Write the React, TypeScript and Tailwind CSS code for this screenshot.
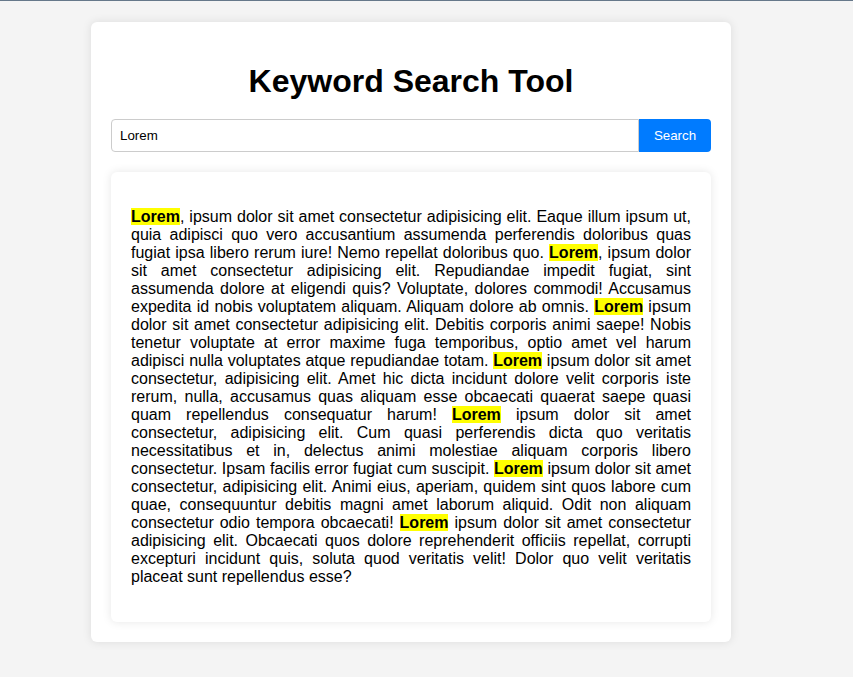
import { Fragment } from 'react'

const text =
  'Lorem, ipsum dolor sit amet consectetur adipisicing elit. Eaque illum ipsum ut, quia adipisci quo vero accusantium assumenda perferendis doloribus quas fugiat ipsa libero rerum iure! Nemo repellat doloribus quo. Lorem, ipsum dolor sit amet consectetur adipisicing elit. Repudiandae impedit fugiat, sint assumenda dolore at eligendi quis? Voluptate, dolores commodi! Accusamus expedita id nobis voluptatem aliquam. Aliquam dolore ab omnis. Lorem ipsum dolor sit amet consectetur adipisicing elit. Debitis corporis animi saepe! Nobis tenetur voluptate at error maxime fuga temporibus, optio amet vel harum adipisci nulla voluptates atque repudiandae totam. Lorem ipsum dolor sit amet consectetur, adipisicing elit. Amet hic dicta incidunt dolore velit corporis iste rerum, nulla, accusamus quas aliquam esse obcaecati quaerat saepe quasi quam repellendus consequatur harum! Lorem ipsum dolor sit amet consectetur, adipisicing elit. Cum quasi perferendis dicta quo veritatis necessitatibus et in, delectus animi molestiae aliquam corporis libero consectetur. Ipsam facilis error fugiat cum suscipit. Lorem ipsum dolor sit amet consectetur, adipisicing elit. Animi eius, aperiam, quidem sint quos labore cum quae, consequuntur debitis magni amet laborum aliquid. Odit non aliquam consectetur odio tempora obcaecati! Lorem ipsum dolor sit amet consectetur adipisicing elit. Obcaecati quos dolore reprehenderit officiis repellat, corrupti excepturi incidunt quis, soluta quod veritatis velit! Dolor quo velit veritatis placeat sunt repellendus esse?'

const keyword = 'Lorem'

export default function App() {
  const parts = text.split(keyword)

  return (
    <div className="min-h-[677px] bg-[#f4f4f4] font-['Liberation_Sans',Arial,sans-serif]">
      <div className="h-px bg-[#66788a]" />

      <div className="pt-[21px] pb-[35px]">
        <div className="ml-[91px] w-[640px] rounded-md bg-white p-5 shadow-[0_0_10px_rgba(0,0,0,0.1)]">
          {/* Titulo */}
          <h1 className="mt-[21px] mb-[19px] text-center text-[32px] leading-[37px] font-bold text-black">
            Keyword Search Tool
          </h1>

          {/* Pesquisa */}
          <div className="flex">
            <input
              defaultValue="Lorem"
              className="h-[33px] flex-1 rounded-l-[4px] border border-[#cccccc] px-2 text-[13.33px] text-black outline-none"
            />
            <button className="h-[33px] w-[72px] rounded-r-[4px] bg-[#007bff] text-[13.33px] text-white">
              Search
            </button>
          </div>

          {/* Resultados */}
          <div className="mt-5 rounded-md bg-white p-5 shadow-[0_0_10px_rgba(0,0,0,0.1)]">
            <p className="my-4 text-justify text-[16px] leading-[18px] text-black">
              {parts.map((part, i) => (
                <Fragment key={i}>
                  {i > 0 && <mark className="bg-[#ffff00] font-bold text-black">{keyword}</mark>}
                  {part}
                </Fragment>
              ))}
            </p>
          </div>
        </div>
      </div>
    </div>
  )
}
